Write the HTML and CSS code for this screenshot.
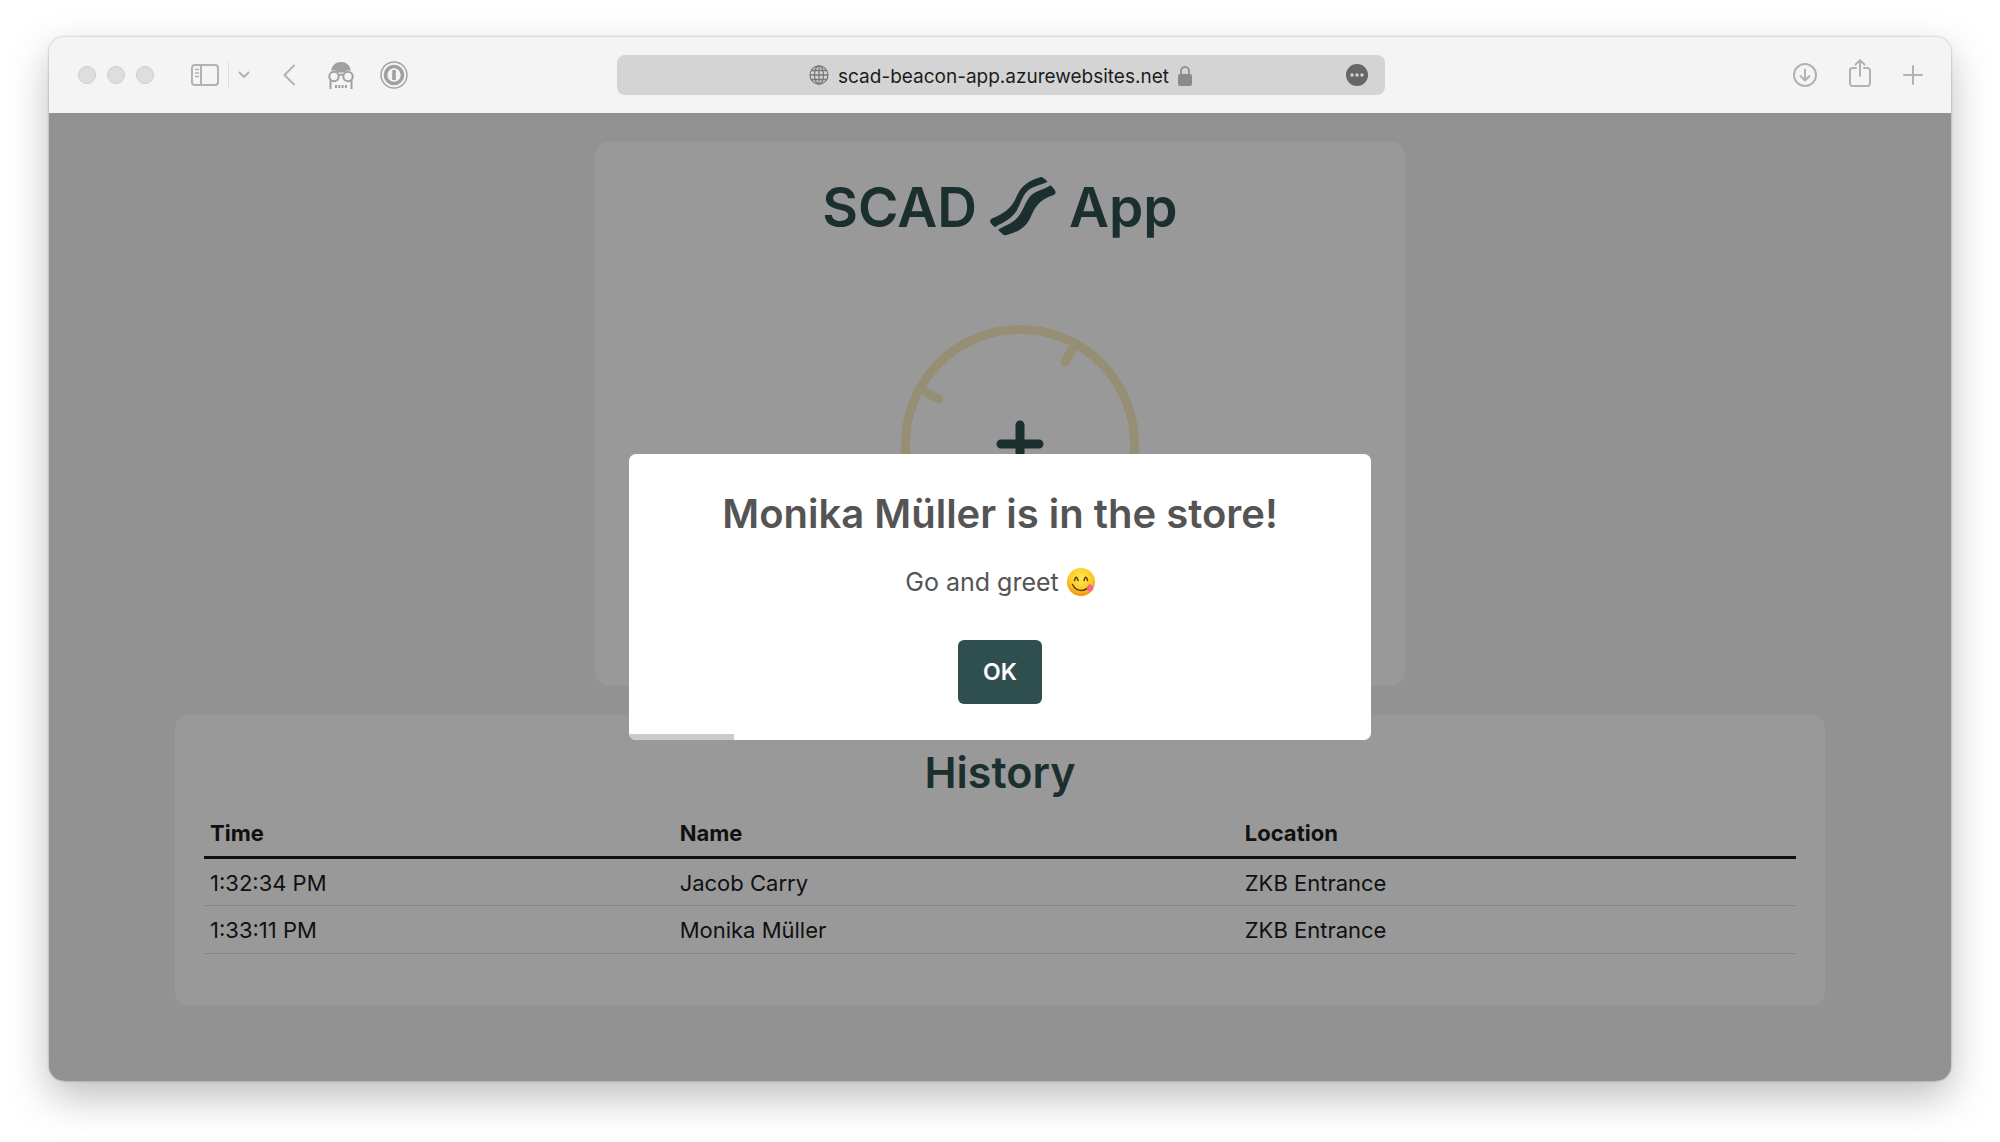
FILE: index.html
```html
<!DOCTYPE html>
<html lang="en">
<head>
<meta charset="utf-8">
<title>SCAD App</title>
<link rel="stylesheet" href="styles.css">
</head>
<body>
<div class="window">
  <header class="toolbar">
    <div class="tools tools-left">
      <div class="lights"><span class="light"></span><span class="light"></span><span class="light"></span></div>
      <div class="sidebar-group">
        <button class="tool" aria-label="Sidebar">
          <svg width="28" height="22" viewBox="0 0 28 22" fill="none" stroke="currentColor" stroke-width="2"><rect x="1" y="1" width="26" height="20" rx="3"/><path d="M10 1v20"/><path d="M4 5.500h4M4 9h4M4 12.500h4" stroke-width="1.300"/></svg>
        </button>
        <span class="divider"></span>
        <button class="tool" aria-label="Tab groups">
          <svg width="12" height="8" viewBox="0 0 12 8" fill="none" stroke="currentColor" stroke-width="2" stroke-linecap="round" stroke-linejoin="round"><path d="M1.500 1.500L6 6l4.500-4.500"/></svg>
        </button>
      </div>
      <button class="tool tool-back" aria-label="Back">
        <svg width="12" height="22" viewBox="0 0 12 22" fill="none" stroke="currentColor" stroke-width="2" stroke-linecap="round" stroke-linejoin="round"><path d="M11 1.500L1.500 11 11 20.500"/></svg>
      </button>
      <div class="extensions">
        <button class="tool tool-dark" aria-label="Privacy">
          <svg width="26" height="28" viewBox="0 0 26 28" fill="none" stroke="currentColor" stroke-width="2"><path d="M3 10C4 4 8 1 13 1s9 3 10 9c-2-1.300-5-.7-6.500 1.500h-7C8 9.300 5 8.700 3 10z" fill="currentColor" stroke="none"/><circle cx="6" cy="15.500" r="4.700"/><circle cx="20" cy="15.500" r="4.700"/><path d="M10.500 14.500q2.500-2 5 0M2.500 18.500V28M23.500 18.500V28"/><path d="M7 25.500h12" stroke-width="3" stroke-dasharray="2 1.300"/></svg>
        </button>
        <button class="tool tool-dark" aria-label="Passwords">
          <svg width="28" height="28" viewBox="0 0 28 28" fill="none" stroke="currentColor"><circle cx="14" cy="14" r="13" stroke-width="1.400"/><circle cx="14" cy="14" r="8.500" stroke-width="3.600"/><path d="M14 9v10" stroke-width="3.600"/></svg>
        </button>
      </div>
    </div>
    <div class="address">
      <svg class="globe" width="20" height="20" viewBox="0 0 20 20" fill="none" stroke="currentColor" stroke-width="1.300"><circle cx="10" cy="10" r="9"/><ellipse cx="10" cy="10" rx="4.500" ry="9"/><path d="M10 1v18M1 10h18M2.500 5.500h15M2.500 14.500h15"/></svg>
      <span class="url">scad-beacon-app.azurewebsites.net</span>
      <svg class="lock" width="14" height="21" viewBox="0 0 14 21"><path d="M3 10V6a4 4 0 0 1 8 0v4" fill="none" stroke="currentColor" stroke-width="1.700"/><rect y="9" width="14" height="12" rx="2" fill="currentColor"/></svg>
      <button class="more" aria-label="Page menu"><svg width="22" height="22" viewBox="0 0 22 22"><circle cx="11" cy="11" r="11" fill="#666"/><g fill="#d4d4d4"><circle cx="6" cy="11" r="1.700"/><circle cx="11" cy="11" r="1.700"/><circle cx="16" cy="11" r="1.700"/></g></svg></button>
    </div>
    <div class="tools tools-right">
      <button class="tool" aria-label="Downloads">
        <svg width="24" height="24" viewBox="0 0 24 24" fill="none" stroke="currentColor" stroke-width="2" stroke-linecap="round" stroke-linejoin="round"><circle cx="12" cy="12" r="11"/><path d="M12 6.500v11M7.500 13l4.500 4.500 4.500-4.500"/></svg>
      </button>
      <button class="tool tool-share" aria-label="Share">
        <svg width="22" height="28" viewBox="0 0 22 28" fill="none" stroke="currentColor" stroke-width="2" stroke-linecap="round" stroke-linejoin="round"><path d="M7 9H3.500A2.500 2.500 0 0 0 1 11.500v13A2.500 2.500 0 0 0 3.500 27h15a2.500 2.500 0 0 0 2.500-2.500v-13A2.500 2.500 0 0 0 18.500 9H15M11 17V1.500M6.500 5.500L11 1.200l4.500 4.300"/></svg>
      </button>
      <button class="tool" aria-label="New tab">
        <svg width="20" height="20" viewBox="0 0 20 20" fill="none" stroke="currentColor" stroke-width="2" stroke-linecap="round"><path d="M10 1v18M1 10h18"/></svg>
      </button>
    </div>
  </header>

  <main class="page">
    <section class="card card-app">
      <h1 class="title">SCAD
        <svg class="bacon" width="66" height="60" viewBox="0 0 66 60" fill="currentColor" aria-hidden="true"><path d="M53 .8c-1.200-.8-2.200-.9-3.500-.3C39 3.500 31 9 26.800 19 22 30 16 36 2.500 41.200.2 42.200-.5 44 .7 46.100c1.100 1.700 2.600 3 4.500 4.100C10 46.500 19 44 25 36c6-8 6-16 13-22.500C43 9 51 8 57.500 4.700 56 3.200 54.700 2 53 .8z"/><path d="M60.500 8.300C54.500 12.500 45 14 40 19.500 34.500 26 34 33 27.500 40.500 21.500 47.500 13.500 49 8 52.700c1.500 1.600 3 3.200 4.700 4.600 1.200 1 2.500 1.300 4 .6C27.500 55.500 36 50.500 40.500 40.500 45 30 49 23 63 18.300c2.500-1 3.200-2.800 2-4.900-1-1.800-2.800-3.500-4.500-5.100z"/></svg>
        App</h1>
      <svg class="dial" width="280" height="280" viewBox="0 0 280 280" fill="none" stroke-width="9" stroke-linecap="round" aria-hidden="true"><g stroke="#faefc3"><circle cx="160" cy="140" r="114.500"/><path d="M214 42l-9 16M62 86l17 9"/></g><path d="M160 121v38M141 140h38" stroke="#2f4f4f"/></svg>
    </section>

    <section class="card card-history">
      <h2 class="subtitle">History</h2>
      <table class="history">
        <colgroup><col class="col-time"><col class="col-name"><col></colgroup>
        <thead><tr><th scope="col">Time</th><th scope="col">Name</th><th scope="col">Location</th></tr></thead>
        <tbody>
          <tr><td>1:32:34 PM</td><td>Jacob Carry</td><td>ZKB Entrance</td></tr>
          <tr><td>1:33:11 PM</td><td>Monika Müller</td><td>ZKB Entrance</td></tr>
        </tbody>
      </table>
    </section>

    <div class="overlay">
      <div class="modal" role="dialog" aria-labelledby="modal-title">
        <h2 class="modal-title" id="modal-title">Monika Müller is in the store!</h2>
        <p class="modal-text">Go and greet
          <svg width="28" height="28" viewBox="0 0 28 28" role="img" aria-label="Yummy face"><defs><radialGradient id="face" cx=".5" cy=".35" r=".65"><stop offset="0" stop-color="#ffe94f"/><stop offset=".65" stop-color="#fdc827"/><stop offset="1" stop-color="#f0900d"/></radialGradient></defs><circle cx="14" cy="14" r="14" fill="url(#face)"/><g fill="none" stroke="#5b3b08" stroke-width="1.500" stroke-linecap="round" stroke-linejoin="round"><path d="M7.500 12.500q1.700-6.500 3.600 0M17 12.500q1.700-6.500 3.600 0"/><path d="M5.500 16.500q3 6 9 6 5 0 8-5"/></g><path d="M20 19.500l3-3.500c2.300 1.500 3.700 3.600 3 5.500-.9 2-4 2.300-6 .5z" fill="#fb5f9e"/></svg></p>
        <button class="ok">OK</button>
        <div class="timer"></div>
      </div>
    </div>
  </main>
</div>
</body>
</html>
```
FILE: styles.css
```css
* { box-sizing: border-box; }

body {
  margin: 0;
  min-height: 100vh;
  padding: 37px 49px 61px;
  display: flex;
  background: #fff;
  font-family: Inter, "Liberation Sans", sans-serif;
}

h1, h2, p { margin: 0; }

button {
  padding: 0;
  border: 0;
  background: none;
  font-family: inherit;
}

svg { display: block; flex: none; }

.window {
  flex: 1;
  display: flex;
  flex-direction: column;
  border-radius: 15px;
  overflow: hidden;
  box-shadow: 0 0 2px rgba(0, 0, 0, .4), 0 16px 40px rgba(0, 0, 0, .26);
}

/* Browser toolbar */
.toolbar {
  display: grid;
  grid-template-columns: 1fr 768px 1fr;
  align-items: center;
  height: 76px;
  padding: 0 28px 0 29px;
  background: #f4f4f4;
}

.tools { display: flex; align-items: center; }
.tools-left { gap: 33px; }
.tools-right { justify-content: flex-end; gap: 32px; }

.tool { color: #b2b2b2; }
.tool-dark { color: #a0a0a0; }
.tool-share { padding-bottom: 4px; }

.extensions { display: flex; gap: 26px; }
.lights { display: flex; gap: 11px; margin-right: 4px; }

.light {
  width: 18px;
  height: 18px;
  border: 1px solid #cdcdcd;
  border-radius: 50%;
  background: #dedede;
}

.sidebar-group { display: flex; align-items: center; gap: 9px; }
.divider { width: 1px; height: 26px; background: #dfdfdf; }

.address {
  display: flex;
  align-items: center;
  height: 40px;
  padding: 0 16px 0 38px;
  border-radius: 8px;
  background: #d4d4d4;
}

.globe { margin-left: auto; color: #7a7a7a; }
.url { margin: 0 9px; padding-top: 3px; font-size: 19px; line-height: 24px; color: #1c1c1c; }
.lock { color: #8a8a8a; }
.more { margin-left: auto; }

/* Web page */
.page {
  position: relative;
  flex: 1;
  padding: 29px 0;
  background: #f3f3f3;
}

.card {
  margin: 0 auto 29px;
  padding: 29px;
  border-radius: 14px;
  background: #fff;
}

.card-app { max-width: 810px; height: 544px; }
.card-history { width: 87%; max-width: 1650px; padding-bottom: 52px; }

.title {
  display: flex;
  align-items: center;
  justify-content: center;
  gap: 13px;
  font-size: 55px;
  line-height: 72px;
  font-weight: 600;
  color: #2f4f4f;
}

.dial { margin: 61px auto 0; }

.subtitle {
  font-size: 43px;
  line-height: 56px;
  font-weight: 600;
  text-align: center;
  color: #2f4f4f;
}

.history {
  width: 100%;
  margin-top: 9px;
  border-collapse: collapse;
  table-layout: fixed;
  font-size: 22px;
  line-height: 28px;
  color: #1b1c20;
}

.col-time { width: 29.5%; }
.col-name { width: 35.5%; }

.history th, .history td {
  height: 48px;
  padding: 2px 6px 0;
  text-align: left;
  border-bottom: 1px solid #dbdbdb;
}

.history th { font-weight: 700; border-bottom: 3px solid #1b1c20; }

/* Dialog */
.overlay {
  position: absolute;
  inset: 0;
  display: flex;
  align-items: center;
  justify-content: center;
  background: rgba(0, 0, 0, .4);
}

.modal {
  position: relative;
  width: 742px;
  max-width: 100%;
  padding: 30px 32px 36px;
  display: flex;
  flex-direction: column;
  align-items: center;
  border-radius: 7px;
  overflow: hidden;
  background: #fff;
  color: #545454;
}

.modal-title { font-size: 40px; line-height: 60px; font-weight: 600; }

.modal-text {
  display: flex;
  align-items: center;
  gap: 8px;
  margin: 22px 0 42px;
  font-size: 25px;
  line-height: 32px;
}

.ok {
  width: 84px;
  height: 64px;
  border-radius: 6px;
  background: #2f4f4f;
  color: #fff;
  font-size: 23px;
  font-weight: 600;
}

.timer {
  position: absolute;
  left: 0;
  bottom: 0;
  width: 105px;
  height: 6px;
  background: #cbcbcb;
}
```
